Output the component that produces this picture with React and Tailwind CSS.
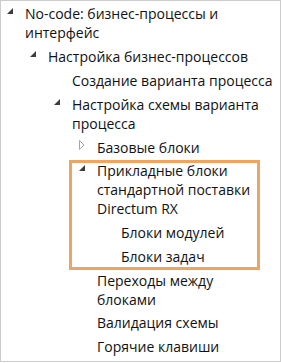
import React from 'react';

const pads = ['pl-[6px]', 'pl-[29px]', 'pl-[53px]', 'pl-[78px]', 'pl-[102px]'];

const Expanded = () => (
  <svg width="6" height="6" viewBox="0 0 6 6" className="mt-[4px]">
    <polygon points="6,0 6,6 0,6" fill="#3c3c3c" />
  </svg>
);

const Collapsed = () => (
  <svg width="6" height="10" viewBox="0 0 6 10" className="mt-[2px]">
    <polygon points="0.5,0.5 5,5 0.5,9.5" fill="none" stroke="#a6a6a6" strokeWidth="1" />
  </svg>
);

const Row = ({ level, glyph, lines }) => (
  <div className={`flex py-[2.4px] ${pads[level]}`}>
    <div className="w-[18px] h-[19px] shrink-0">
      {glyph === 'open' && <Expanded />}
      {glyph === 'closed' && <Collapsed />}
    </div>
    <div className="whitespace-nowrap">
      {lines.map((l, i) => (
        <div key={i}>{l}</div>
      ))}
    </div>
  </div>
);

export default function App() {
  return (
    <div
      className="w-[281px] h-[362px] border border-[#cccccc] bg-white pt-[1px] overflow-hidden text-[14px] leading-[19px] text-[#111111]"
      style={{ fontFamily: '"Open Sans", "Noto Sans", sans-serif' }}
    >
      <Row level={0} glyph="open" lines={['No-code: бизнес-процессы и', 'интерфейс']} />
      <Row level={1} glyph="open" lines={['Настройка бизнес-процессов']} />
      <Row level={2} lines={['Создание варианта процесса']} />
      <Row level={2} glyph="open" lines={['Настройка схемы варианта', 'процесса']} />
      <Row level={3} glyph="closed" lines={['Базовые блоки']} />

      {/* Highlighted group */}
      <div className="relative">
        <Row level={3} glyph="open" lines={['Прикладные блоки', 'стандартной поставки', 'Directum RX']} />
        <Row level={4} lines={['Блоки модулей']} />
        <Row level={4} lines={['Блоки задач']} />
        <div className="absolute left-[68px] right-[20px] top-[1px] -bottom-[2px] border-[3px] border-[#eda566]" />
      </div>

      <Row level={3} lines={['Переходы между', 'блоками']} />
      <Row level={3} lines={['Валидация схемы']} />
      <Row level={3} lines={['Горячие клавиши']} />
    </div>
  );
}
